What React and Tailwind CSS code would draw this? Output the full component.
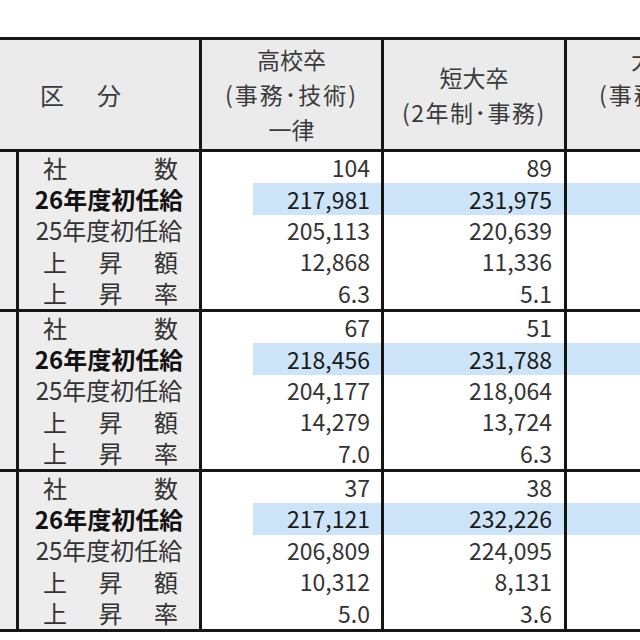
const font = { fontFamily: '"Noto Sans CJK JP", "Noto Sans", sans-serif' }

const labels = [
  { chars: ["社", "数"] },
  { text: "26年度初任給", bold: true },
  { text: "25年度初任給" },
  { chars: ["上", "昇", "額"] },
  { chars: ["上", "昇", "率"] },
]

const groups = [
  [["104", "89"], ["217,981", "231,975"], ["205,113", "220,639"], ["12,868", "11,336"], ["6.3", "5.1"]],
  [["67", "51"], ["218,456", "231,788"], ["204,177", "218,064"], ["14,279", "13,724"], ["7.0", "6.3"]],
  [["37", "38"], ["217,121", "232,226"], ["206,809", "224,095"], ["10,312", "8,131"], ["5.0", "3.6"]],
]

function Label({ item }) {
  if (item.chars) {
    return (
      <div className="flex h-full items-center justify-between pl-[24px] pr-[21px] text-[24px] leading-none text-[#333]">
        {item.chars.map((c, i) => <span key={i}>{c}</span>)}
      </div>
    )
  }
  return (
    <div className={"flex h-full items-center justify-center text-[24px] leading-none " + (item.bold ? "font-bold text-[#111]" : "text-[#333]")}>
      {item.text}
    </div>
  )
}

function Group({ rows }) {
  return (
    <div className="flex border-b-[3px] border-[#161616]">
      {/* left side column, cut off */}
      <div className="w-[16px] shrink-0 bg-[#ededed]" />
      <div className="flex flex-col">
        {rows.map((r, i) => {
          const hi = i === 1
          return (
            <div key={i} className="flex h-[31.4px] leading-none">
              <div className="w-[183px] shrink-0 border-l-[3px] border-[#161616] bg-[#ededed]">
                <Label item={labels[i]} />
              </div>
              <div className="w-[182px] shrink-0 border-l-[3px] border-[#161616] bg-white">
                <div className={"ml-[51px] flex h-full items-center justify-end pr-[11px] text-[23px] " + (hi ? "bg-[#cde3f8] text-[#1a1a1a]" : "text-[#333]")}>
                  {r[0]}
                </div>
              </div>
              <div className={"flex w-[183px] shrink-0 items-center justify-end border-l-[3px] border-[#161616] pr-[12px] text-[23px] " + (hi ? "bg-[#cde3f8] text-[#1a1a1a]" : "bg-white text-[#333]")}>
                {r[1]}
              </div>
              <div className={"w-[200px] shrink-0 border-l-[3px] border-[#161616] " + (hi ? "bg-[#cde3f8]" : "bg-white")} />
            </div>
          )
        })}
      </div>
    </div>
  )
}

export default function App() {
  return (
    <div className="h-[640px] w-[640px] overflow-hidden bg-white pt-[37px]" style={font}>
      <div className="w-[767px] border-t-[3px] border-[#161616]">
        {/* header */}
        <div className="flex h-[112px] border-b-[3px] border-[#161616] bg-[#ebebeb] text-[23px] text-[#3a3a3a]">
          <div className="flex w-[199px] shrink-0 items-center gap-[33px] pl-[40px] text-[24px]">
            <span>区</span>
            <span>分</span>
          </div>
          <div className="flex w-[182px] shrink-0 flex-col items-center justify-center border-l-[3px] border-[#161616] leading-[35px]">
            <span>高校卒</span>
            <span className="tracking-[2px]">(事務･技術)</span>
            <span>一律</span>
          </div>
          <div className="flex w-[183px] shrink-0 flex-col items-center justify-center border-l-[3px] border-[#161616] leading-[35px]">
            <span>短大卒</span>
            <span className="tracking-[1.5px]">(2年制･事務)</span>
          </div>
          <div className="flex w-[200px] shrink-0 flex-col items-center justify-center border-l-[3px] border-[#161616] leading-[35px]">
            <span>大学卒</span>
            <span className="tracking-[2px]">(事務･技術)</span>
            <span>一律</span>
          </div>
        </div>
        {groups.map((g, i) => <Group key={i} rows={g} />)}
      </div>
    </div>
  )
}
